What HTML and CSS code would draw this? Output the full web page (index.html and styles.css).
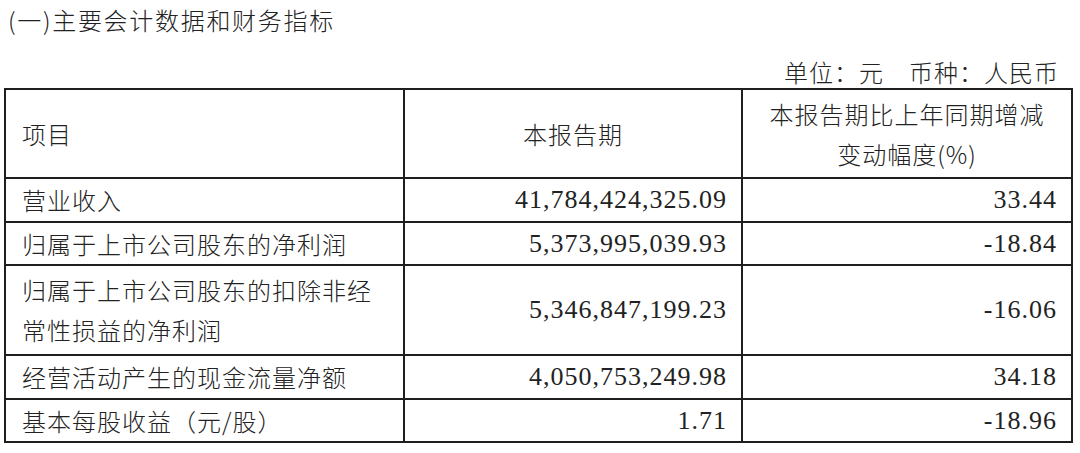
FILE: index.html
```html
<!DOCTYPE html>
<html lang="zh-CN">
<head>
<meta charset="utf-8">
<title>主要会计数据和财务指标</title>
<link rel="stylesheet" href="styles.css">
</head>
<body>
<div class="page">
  <h1 class="title">(一)主要会计数据和财务指标</h1>
  <div class="unit">单位：元　币种：人民币</div>
  <div class="grid">
    <div class="cell head left">项目</div>
    <div class="cell head center">本报告期</div>
    <div class="cell head center two">本报告期比上年同期增减<br>变动幅度(%)</div>

    <div class="cell left">营业收入</div>
    <div class="cell num">41,784,424,325.09</div>
    <div class="cell num">33.44</div>

    <div class="cell left">归属于上市公司股东的净利润</div>
    <div class="cell num">5,373,995,039.93</div>
    <div class="cell num">-18.84</div>

    <div class="cell left two">归属于上市公司股东的扣除非经<br>常性损益的净利润</div>
    <div class="cell num">5,346,847,199.23</div>
    <div class="cell num">-16.06</div>

    <div class="cell left">经营活动产生的现金流量净额</div>
    <div class="cell num">4,050,753,249.98</div>
    <div class="cell num">34.18</div>

    <div class="cell left">基本每股收益（元/股）</div>
    <div class="cell num">1.71</div>
    <div class="cell num">-18.96</div>
  </div>
</div>
</body>
</html>
```

FILE: styles.css
```css
html, body {
  margin: 0;
  padding: 0;
  background: #ffffff;
}

body {
  font-family: "Noto Sans CJK SC", "Noto Sans", sans-serif;
  font-weight: 300;
  color: #222222;
}

.page {
  width: 1069px;
  padding-left: 4px;
}

.title {
  margin: 0;
  padding-left: 4px;
  height: 44px;
  line-height: 40px;
  font-size: 24px;
  font-weight: 300;
  letter-spacing: 1.7px;
}

.unit {
  height: 44px;
  line-height: 56px;
  text-align: right;
  padding-right: 14px;
  font-size: 24px;
  letter-spacing: 1px;
}

.grid {
  display: grid;
  grid-template-columns: 397px 336px 328px;
  grid-template-rows: 87px 42px 41px 88px 42px 41px;
  gap: 2px;
  padding: 2px;
  background: #1e1e1e;
}

.cell {
  background: #ffffff;
  display: flex;
  flex-direction: column;
  justify-content: center;
  font-size: 24px;
  letter-spacing: 1px;
  line-height: 40px;
}

.left {
  padding-left: 16px;
  align-items: flex-start;
  text-align: left;
}

.center {
  align-items: center;
  text-align: center;
}

.num {
  align-items: flex-end;
  text-align: right;
  padding-right: 14px;
  font-family: "Liberation Serif", "Times New Roman", serif;
  font-weight: 400;
  font-size: 26px;
  letter-spacing: 1px;
}
```
